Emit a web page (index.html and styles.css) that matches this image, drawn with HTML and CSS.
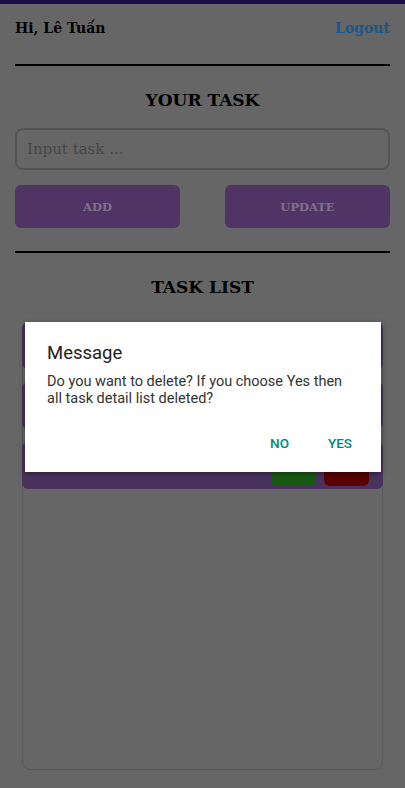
FILE: index.html
```html
<!DOCTYPE html>
<html>
<head>
<meta charset="utf-8">
<link rel="stylesheet" href="styles.css">
</head>
<body>
<div class="status"></div>
<main class="page">
  <header class="top">
    <span class="hi">Hi, Lê Tuấn</span>
    <span class="logout">Logout</span>
  </header>
  <div class="rule"></div>
  <h2 class="title">YOUR TASK</h2>
  <div class="input">Input task ...</div>
  <div class="actions">
    <div class="btn">ADD</div>
    <div class="btn">UPDATE</div>
  </div>
  <div class="rule rule2"></div>
  <h2 class="title title2">TASK LIST</h2>
  <section class="list">
    <div class="item"><span class="ok"></span><span class="del"></span></div>
    <div class="item"><span class="ok"></span><span class="del"></span></div>
    <div class="item"><span class="ok"></span><span class="del"></span></div>
  </section>
</main>
<div class="dialog">
  <div class="d-title">Message</div>
  <div class="d-body">Do you want to delete? If you choose Yes then all task detail list deleted?</div>
  <div class="d-actions">
    <span class="d-btn">NO</span>
    <span class="d-btn">YES</span>
  </div>
</div>
</body>
</html>
```
FILE: styles.css
```css
* { box-sizing: border-box; }
html, body { margin: 0; padding: 0; }
body {
  width: 405px;
  height: 788px;
  background: #666666;
  font-family: "DejaVu Serif", serif;
  position: relative;
  overflow: hidden;
}
.status { height: 4px; background: #1b0c4a; }
.page { padding: 0 15px; }
.top {
  display: flex;
  justify-content: space-between;
  align-items: center;
  height: 20px;
  margin-top: 14px;
}
.hi { font-weight: bold; font-size: 14px; color: #000; }
.logout { font-size: 14px; font-weight: bold; color: #1d5686; }
.rule { height: 2px; background: #000; margin-top: 26px; }
.rule2 { margin-top: 23px; }
.title {
  margin: 22px 0 0;
  height: 24px;
  line-height: 24px;
  text-align: center;
  font-size: 17px;
  font-weight: bold;
  color: #000;
}
.input {
  margin-top: 16px;
  height: 42px;
  border: 2px solid #555;
  border-radius: 8px;
  padding: 0 10px;
  display: flex;
  align-items: center;
  font-size: 15px;
  color: #464646;
}
.actions {
  margin-top: 15px;
  display: flex;
  justify-content: space-between;
}
.btn {
  width: 165px;
  height: 43px;
  border-radius: 6px;
  background: #503466;
  display: flex;
  align-items: center;
  justify-content: center;
  font-size: 11.5px;
  font-weight: bold;
  color: #7f7188;
}
.list {
  margin: 23px 7px 0;
  height: 448px;
  border: 1px solid #5a5a5a;
  border-radius: 8px;
  display: flex;
  flex-direction: column;
  gap: 13px;
}
.item {
  margin: -1px -1px 0;
  height: 47px;
  background: #4a325f;
  border-radius: 6px;
  display: flex;
  justify-content: flex-end;
  align-items: flex-end;
  gap: 8px;
  padding: 0 14px 3px 0;
}
.item + .item { margin-top: 0; }
.ok, .del {
  width: 45px;
  height: 36px;
  border-radius: 6px;
}
.ok { background: #185a14; }
.del { background: #5a0000; }
.dialog {
  position: absolute;
  left: 25px;
  top: 322px;
  width: 356px;
  height: 150px;
  background: #fff;
  box-shadow: 0 2px 6px rgba(0,0,0,0.4);
  padding: 19px 22px 0;
  font-family: Roboto, sans-serif;
}
.d-title { font-size: 18.5px; color: #212121; line-height: 24px; }
.d-body {
  margin-top: 8px;
  font-size: 14.5px;
  line-height: 17px;
  color: #333;
}
.d-actions {
  display: flex;
  justify-content: flex-end;
  margin-top: 28px;
  margin-right: 7px;
  gap: 39px;
}
.d-btn {
  font-size: 13.5px;
  font-weight: 500;
  color: #00897b;
}
```
